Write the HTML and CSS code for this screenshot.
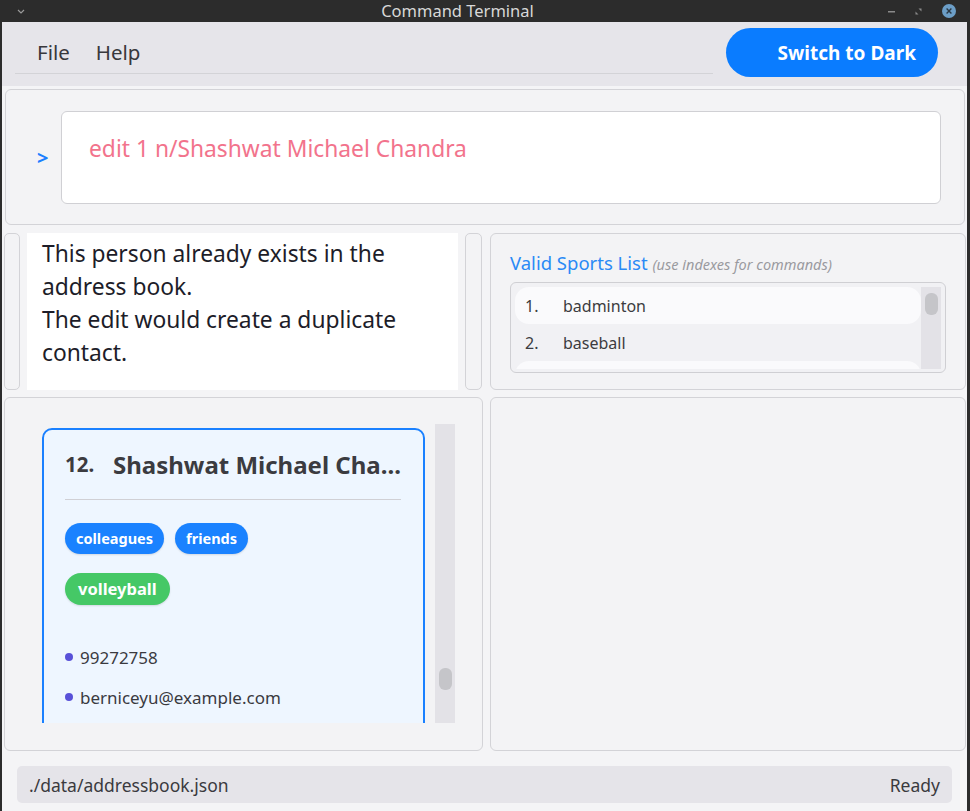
FILE: index.html
```html
<!DOCTYPE html>
<html lang="en">
<head>
<meta charset="utf-8">
<title>Command Terminal</title>
<link rel="stylesheet" href="styles.css">
</head>
<body>
<div class="frame">
  <div class="titlebar">
    <div class="tb-left">
      <svg class="tb-chevron" width="8" height="5" viewBox="0 0 8 5"><path d="M1 1 L4 4 L7 1" fill="none" stroke="#9a9a9a" stroke-width="1.2"/></svg>
    </div>
    <div class="tb-title">Command Terminal</div>
    <div class="tb-controls">
      <svg width="7" height="3" viewBox="0 0 7 3"><rect x="0" y="1" width="7" height="1.5" fill="#8a8a8a"/></svg>
      <svg width="7" height="7" viewBox="0 0 7 7"><path d="M3.5 0.5 H6.5 V3.5 Z M0.5 3.5 V6.5 H3.5 Z" fill="#8a8a8a"/></svg>
      <svg width="14" height="14" viewBox="0 0 14 14"><circle cx="7" cy="7" r="7" fill="#6c9ec7"/><path d="M4.6 4.6 L9.4 9.4 M9.4 4.6 L4.6 9.4" stroke="#2b3946" stroke-width="1.4"/></svg>
    </div>
  </div>
  <div class="app">
    <div class="menubar">
      <div class="menu">
        <span class="menu-item">File</span>
        <span class="menu-item">Help</span>
      </div>
      <button class="theme-btn">Switch to Dark</button>
    </div>

    <div class="command-panel">
      <span class="prompt">&gt;</span>
      <div class="command-input">edit 1 n/Shashwat Michael Chandra</div>
    </div>

    <div class="row row-top">
      <div class="result-pane">
        <div class="stub"></div>
        <div class="result-text">This person already exists in the address book.<br>The edit would create a duplicate contact.</div>
        <div class="stub stub-right"></div>
      </div>
      <div class="panel sports-panel">
        <div class="sports-title">Valid Sports List <span class="sports-hint">(use indexes for commands)</span></div>
        <div class="sports-box">
          <div class="sports-list">
            <div class="sport-item odd"><span class="sport-num">1.</span><span>badminton</span></div>
            <div class="sport-item"><span class="sport-num">2.</span><span>baseball</span></div>
            <div class="sport-item odd"></div>
          </div>
          <div class="scroll-track small"><div class="scroll-thumb top"></div></div>
        </div>
      </div>
    </div>

    <div class="row row-main">
      <div class="panel list-panel">
        <div class="list-viewport">
          <div class="card">
            <div class="card-head">
              <span class="card-index">12.</span>
              <span class="card-name">Shashwat Michael Cha...</span>
            </div>
            <div class="card-divider"></div>
            <div class="tags">
              <span class="tag">colleagues</span>
              <span class="tag">friends</span>
            </div>
            <div class="tags sports-tags">
              <span class="tag sport">volleyball</span>
            </div>
            <div class="contacts">
              <div class="contact"><span class="dot"></span>99272758</div>
              <div class="contact"><span class="dot"></span>berniceyu@example.com</div>
            </div>
          </div>
        </div>
        <div class="scroll-track"><div class="scroll-thumb mid"></div></div>
      </div>
      <div class="panel"></div>
    </div>

    <div class="statusbar">
      <span>./data/addressbook.json</span>
      <span>Ready</span>
    </div>
  </div>
</div>
</body>
</html>
```

FILE: styles.css
```css
* { box-sizing: border-box; }

html, body {
  margin: 0;
  padding: 0;
  width: 970px;
  height: 811px;
  overflow: hidden;
  background: #2c2c2c;
  font-family: "Noto Sans", "Open Sans", sans-serif;
}

.frame {
  width: 970px;
  height: 811px;
  display: flex;
  flex-direction: column;
}

/* ---------- title bar ---------- */
.titlebar {
  height: 22px;
  flex: none;
  display: flex;
  align-items: center;
  background: #2c2c2c;
}
.tb-left {
  width: 40px;
  display: flex;
  align-items: center;
  padding-left: 17px;
}
.tb-title {
  flex: 1;
  text-align: center;
  color: #d8d8d8;
  font-size: 16.5px;
  line-height: 22px;
}
.tb-controls {
  width: 95px;
  display: flex;
  align-items: center;
  justify-content: flex-end;
  padding-right: 14px;
  gap: 20px;
}

/* ---------- app ---------- */
.app {
  flex: 1;
  min-height: 0;
  margin: 0 3px 0 2px;
  background: #f4f4f6;
  display: flex;
  flex-direction: column;
}

.menubar {
  height: 64px;
  flex: none;
  background: #e6e5ea;
  display: flex;
  align-items: flex-start;
  padding: 6px 29px 0 13px;
  gap: 13px;
}
.menu {
  flex: 1;
  height: 46px;
  border-bottom: 1px solid #d3d3d7;
  display: flex;
  align-items: center;
  padding: 2px 0 0 22px;
  gap: 26px;
}
.menu-item {
  font-size: 20.5px;
  color: #38383c;
}
.theme-btn {
  width: 212px;
  height: 49px;
  border: none;
  border-radius: 25px;
  background: #0a7cff;
  color: #ffffff;
  font-family: inherit;
  font-weight: 700;
  font-size: 19px;
  text-align: right;
  padding: 1px 22px 0 0;
}

/* ---------- command ---------- */
.command-panel {
  flex: none;
  margin: 3px 2px 0 3px;
  height: 136px;
  border: 1px solid #d3d3d7;
  border-radius: 6px;
  background: #f3f3f5;
  display: flex;
  align-items: center;
  padding: 0 23px 0 31px;
  gap: 13px;
}
.prompt {
  color: #1a7fff;
  font-weight: 700;
  font-size: 20px;
  line-height: 20px;
  width: 11px;
  padding-top: 1px;
}
.command-input {
  flex: 1;
  height: 93px;
  background: #ffffff;
  border: 1px solid #d0d0d4;
  border-radius: 6px;
  padding: 22px 0 0 27px;
  font-size: 22.8px;
  line-height: 29px;
  color: #f2738c;
}

/* ---------- rows ---------- */
.row {
  flex: none;
  display: grid;
  grid-template-columns: 479px 1fr;
  grid-template-rows: 100%;
  gap: 7px;
  padding: 0 1px 0 2px;
}
.row-top { margin-top: 8px; height: 157px; }
.row-main { margin-top: 7px; height: 354px; }

.panel {
  min-height: 0;
  border: 1px solid #d3d3d7;
  border-radius: 6px;
  background: #f3f3f5;
}

.result-pane {
  display: flex;
  gap: 7px;
  padding-right: 1px;
}
.stub {
  width: 16px;
  border: 1px solid #d3d3d7;
  border-radius: 5px;
  background: #f3f3f5;
}
.stub-right { width: 17px; }
.result-text {
  flex: 1;
  background: #ffffff;
  padding: 3.5px 10px 0 15px;
  font-size: 22.8px;
  line-height: 33px;
  color: #1d1d29;
}

/* sports */
.sports-panel {
  padding: 17px 19px 0 19px;
  overflow: hidden;
}
.sports-title {
  font-size: 18.5px;
  line-height: 24px;
  color: #2a8af5;
  white-space: nowrap;
}
.sports-hint {
  font-size: 14.5px;
  font-style: italic;
  color: #9a9a9f;
}
.sports-box {
  margin-top: 6px;
  height: 91px;
  border: 1px solid #cfcfd3;
  border-radius: 6px;
  background: #f1f1f4;
  padding: 4px 4px 3px 4px;
  display: flex;
  overflow: hidden;
}
.sports-list {
  flex: 1;
  overflow: hidden;
}
.sport-item {
  height: 37px;
  display: flex;
  align-items: center;
  padding-left: 10px;
  font-size: 16px;
  color: #3c3c40;
  border-radius: 14px;
}
.sport-item.odd { background: #fafafc; }
.sport-num { width: 38px; }

.scroll-track {
  width: 20px;
  flex: none;
  background: #e3e2e7;
  position: relative;
}
.scroll-thumb {
  position: absolute;
  left: 4px;
  width: 13px;
  height: 22px;
  border-radius: 6px;
  background: #c5c5c9;
}
.scroll-thumb.top { top: 6px; }
.scroll-thumb.mid { top: 244px; }

/* list panel */
.list-panel {
  display: flex;
  padding: 26px 27px 27px 0;
  overflow: hidden;
}
.list-viewport {
  flex: 1;
  min-height: 0;
  overflow: hidden;
  padding: 4px 10px 0 37px;
}
.card {
  border: 2px solid #1a80ff;
  border-radius: 10px;
  background: #eef6ff;
  padding: 22px 22px 20px 21px;
}
.card-head {
  display: flex;
  align-items: center;
  height: 24px;
  color: #3b3b40;
  font-weight: 700;
  white-space: nowrap;
}
.card-index {
  font-size: 20.5px;
  width: 48px;
}
.card-name {
  font-size: 24px;
}
.card-divider {
  margin-top: 23px;
  height: 1px;
  background: #d0d0d5;
}
.tags {
  display: flex;
  gap: 11px;
  margin-top: 23px;
}
.sports-tags { margin-top: 19px; }
.tag {
  height: 31px;
  line-height: 31px;
  padding: 0 11px;
  border-radius: 16px;
  background: #1a82ff;
  color: #ffffff;
  font-weight: 700;
  font-size: 14.5px;
  box-shadow: 0 1px 2px rgba(0, 0, 0, 0.12);
}
.tag.sport {
  height: 32px;
  line-height: 32px;
  padding: 0 13px;
  font-size: 16.5px;
  background: #45c866;
}
.contacts { margin-top: 32px; }
.contact {
  height: 40px;
  display: flex;
  align-items: center;
  font-size: 17px;
  color: #3a3a3f;
}
.dot {
  width: 8px;
  height: 8px;
  border-radius: 50%;
  background: #5851d8;
  margin: 0 7px 0 0;
}

/* status bar */
.statusbar {
  flex: none;
  margin: 15px 15px 0 15px;
  height: 37px;
  border-radius: 5px;
  background: #e5e4e9;
  display: flex;
  align-items: center;
  justify-content: space-between;
  padding: 0 12px;
  font-size: 17.5px;
  color: #3a3a3e;
}
```
